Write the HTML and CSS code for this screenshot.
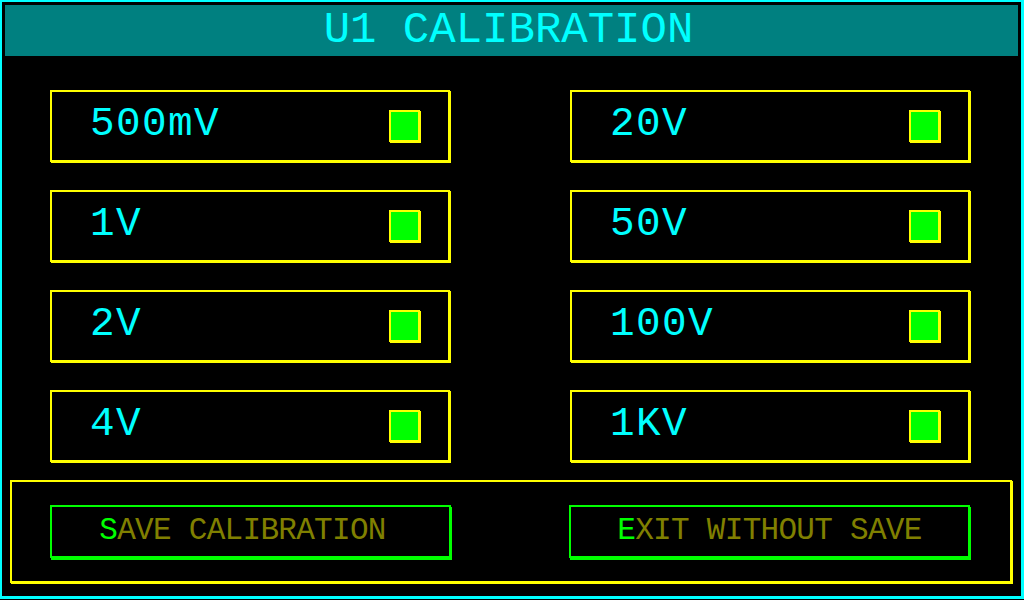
FILE: index.html
```html
<!DOCTYPE html>
<html lang="en">

<head>
  <meta charset="UTF-8">
  <meta name="viewport" content="width=device-width, initial-scale=1.0">
  <title>U1 Calibration</title>
  <link rel="stylesheet" href="styles.css">
</head>

<body>

  <div class="frame">
    <div class="title_bar">U1 CALIBRATION</div>

    <div class="range_grid">
      <div class="range_card"><span class="range_label">500mV</span><span class="led"></span></div>
      <div class="range_card"><span class="range_label">20V</span><span class="led"></span></div>
      <div class="range_card"><span class="range_label">1V</span><span class="led"></span></div>
      <div class="range_card"><span class="range_label">50V</span><span class="led"></span></div>
      <div class="range_card"><span class="range_label">2V</span><span class="led"></span></div>
      <div class="range_card"><span class="range_label">100V</span><span class="led"></span></div>
      <div class="range_card"><span class="range_label">4V</span><span class="led"></span></div>
      <div class="range_card"><span class="range_label">1KV</span><span class="led"></span></div>
    </div>

    <div class="action_box">
      <div class="action_btn save_btn"><span class="hotkey">S</span>AVE CALIBRATION</div>
      <div class="action_btn"><span class="hotkey">E</span>XIT WITHOUT SAVE</div>
    </div>
  </div>

</body>

</html>
```

FILE: styles.css
```css
body {
  margin: 0;
  background: #000;
  font-family: "Liberation Mono", "DejaVu Sans Mono", monospace;
}

.frame {
  box-sizing: border-box;
  width: 1024px;
  height: 599px;
  border-style: solid;
  border-color: #00FFFF;
  border-width: 2px 3px 3px 2px;
  background: #000;
}

.title_bar {
  margin: 3px 3px 0 3px;
  height: 51px;
  background: #008080;
  color: #00FFFF;
  font-size: 44px;
  line-height: 51px;
  text-align: center;
  padding-right: 6px;
}

.range_grid {
  display: grid;
  grid-template-columns: 400px 400px;
  column-gap: 120px;
  row-gap: 28px;
  margin: 34px 0 0 48px;
}

.range_card {
  box-sizing: border-box;
  height: 72px;
  border: 2px solid #FFFF00;
  box-shadow: 1px 1px 0 #FFFF00;
  display: flex;
  align-items: center;
  justify-content: space-between;
  padding: 0 28px 0 38px;
}

.range_label {
  color: #00FFFF;
  font-size: 41px;
  letter-spacing: 1.4px;
  padding-bottom: 4px;
}

.led {
  box-sizing: border-box;
  width: 31px;
  height: 32px;
  border: 2px solid #FFFF00;
  box-shadow: 1px 1px 0 #FFFF00;
  background: #00FF00;
}

.action_box {
  box-sizing: border-box;
  width: 1002px;
  height: 103px;
  margin: 18px 0 0 8px;
  border: 2px solid #FFFF00;
  box-shadow: 1px 1px 0 #FFFF00;
  display: flex;
  gap: 118px;
  padding: 23px 0 0 38px;
}

.action_btn {
  box-sizing: border-box;
  width: 401px;
  height: 53px;
  border: 2px solid #00FF00;
  box-shadow: 1px 2px 0 #00FF00;
  color: #808000;
  font-size: 31px;
  letter-spacing: -0.7px;
  display: flex;
  align-items: center;
  justify-content: center;
  padding-bottom: 3px;
}

.save_btn {
  padding-right: 16px;
}

.hotkey {
  color: #00FF00;
}
```
